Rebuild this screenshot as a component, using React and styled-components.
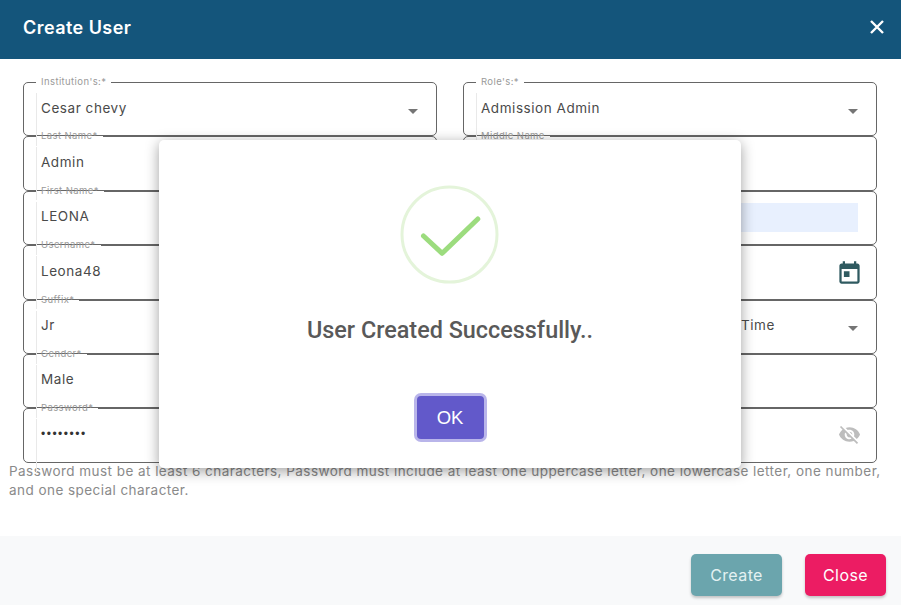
import React from 'react'
import styled, { createGlobalStyle } from 'styled-components'

const GlobalStyle = createGlobalStyle`
  html, body {
    margin: 0;
    background: #fff;
    overflow: hidden;
  }
  * {
    box-sizing: border-box;
  }
`

const Dialog = styled.div`
  position: relative;
  display: flex;
  flex-direction: column;
  width: 901px;
  height: 606px;
  font-family: Inter, 'Liberation Sans', sans-serif;
  background: #fff;
`

const Header = styled.header`
  display: flex;
  align-items: center;
  justify-content: space-between;
  height: 59px;
  padding: 0 17px 5px 23px;
  background: #14557b;
  color: #fff;
`

const Title = styled.h1`
  margin: 0;
  font-size: 18px;
  font-weight: 600;
  letter-spacing: 0.45px;
`

const CloseIcon = styled.svg`
  width: 14px;
  height: 14px;
  stroke: #fff;
  stroke-width: 2.4;
`

const Form = styled.div`
  display: grid;
  grid-template-columns: 414px 414px;
  column-gap: 26px;
  padding: 18px 0 0 23px;
`

const Column = styled.div`
  display: flex;
  flex-direction: column;
`

const Field = styled.fieldset`
  position: relative;
  display: block;
  width: 414px;
  height: 59.4px;
  margin: 0;
  padding: 0;
  border: 1px solid #666;
  border-radius: 5px;

  & + & {
    margin-top: -5px;
  }

  &::before {
    content: '';
    position: absolute;
    left: 12px;
    top: 5px;
    width: 1px;
    height: 53px;
    background: #e9e9e9;
  }
`

const Legend = styled.legend`
  height: 11px;
  margin-left: 12px;
  padding: 0 5px;
  font-size: 9.5px;
  line-height: 9px;
  letter-spacing: 0.4px;
  color: #9a9a9a;

  &:empty {
    padding: 0;
  }
`

const FieldBody = styled.div`
  display: flex;
  align-items: center;
  justify-content: space-between;
  height: 47px;
  padding: 0 17px 8px 17px;
`

const Value = styled.span`
  padding-left: ${(p) => p.$indent || 0}px;
  font-size: 13.5px;
  letter-spacing: 0.55px;
  color: #4a4a4a;
`

const Dots = styled(Value)`
  font-family: 'Liberation Sans', sans-serif;
  font-size: 12px;
  letter-spacing: 1.5px;
  color: #333;
`

const Caret = styled.span`
  width: 0;
  height: 0;
  margin: 7px 1px 0 0;
  border-left: 5.5px solid transparent;
  border-right: 5.5px solid transparent;
  border-top: 5.5px solid #757575;
`

const Autofill = styled.div`
  flex: 1;
  height: 29px;
  margin: 2px 1px 0 0;
  background: #e8f0fe;
`

const Spacer = styled.span`
  flex: 1;
`

const FieldIcon = styled.svg`
  flex: none;
  width: ${(p) => p.$size}px;
  height: ${(p) => p.$size}px;
  margin: ${(p) => p.$top}px ${(p) => p.$right}px 0 0;
  fill: ${(p) => p.$color};
`

const Helper = styled.p`
  margin: -1px 0 0;
  padding-left: 9px;
  font-size: 13.5px;
  line-height: 19px;
  letter-spacing: 0.45px;
  color: #8a8a8a;
  white-space: nowrap;
`

const Footer = styled.footer`
  display: flex;
  justify-content: flex-end;
  gap: 23px;
  height: 69px;
  margin-top: auto;
  margin-bottom: 1px;
  padding: 18px 15px 0 0;
  background: #f8f9fa;
`

const FooterButton = styled.button`
  width: ${(p) => p.$width}px;
  height: 42px;
  border: 0;
  border-radius: 5px;
  background: ${(p) => p.$bg};
  color: ${(p) => p.$color};
  font-family: inherit;
  font-size: 16px;
  letter-spacing: 0.4px;
  box-shadow: 0 2px 3px rgba(0, 0, 0, 0.22);
`

const Alert = styled.div`
  position: absolute;
  left: 159px;
  top: 140px;
  display: flex;
  flex-direction: column;
  align-items: center;
  width: 582px;
  height: 328px;
  padding-top: 45px;
  background: #fff;
  border-radius: 5px;
  box-shadow: 0 3px 14px rgba(0, 0, 0, 0.38);
  font-family: Roboto, 'Liberation Sans', sans-serif;
`

const SuccessRing = styled.svg`
  width: 99px;
  height: 99px;
  margin-right: 2px;
`

const AlertText = styled.h2`
  margin: 33px 0 0;
  font-size: 23.4px;
  font-weight: 500;
  line-height: 26px;
  color: #595959;
`

const OkButton = styled.button`
  width: 67px;
  height: 43px;
  margin-top: 53px;
  border: 0;
  border-radius: 4px;
  background: #6259ca;
  color: #fff;
  font-family: 'Liberation Sans', sans-serif;
  font-size: 18.5px;
  box-shadow: 0 0 0 3px #b9b5ea;
`

const SelectField = ({ label, value, indent }) => (
  <Field>
    <Legend>{label}</Legend>
    <FieldBody>
      <Value $indent={indent}>{value}</Value>
      <Caret />
    </FieldBody>
  </Field>
)

const TextField = ({ label, value, children }) => (
  <Field>
    <Legend>{label}</Legend>
    <FieldBody>
      {value && <Value>{value}</Value>}
      {children}
    </FieldBody>
  </Field>
)

export default function App() {
  return (
    <Dialog>
      <GlobalStyle />
      <Header>
        <Title>Create User</Title>
        <CloseIcon viewBox="0 0 14 14">
          <path d="M1 1l12 12M13 1L1 13" />
        </CloseIcon>
      </Header>

      <Form>
        <Column>
          <SelectField label="Institution's:*" value="Cesar chevy" />
          <TextField label="Last Name*" value="Admin" />
          <TextField label="First Name*" value="LEONA" />
          <TextField label="Username*" value="Leona48" />
          <TextField label="Suffix*" value="Jr" />
          <TextField label="Gender*" value="Male" />
          <TextField label="Password*">
            <Dots>••••••••</Dots>
          </TextField>
        </Column>
        <Column>
          <SelectField label="Role's:*" value="Admission Admin" />
          <TextField label="Middle Name" />
          <TextField>
            <Autofill />
          </TextField>
          <TextField>
            <Spacer />
            <FieldIcon viewBox="0 0 24 24" $size={27} $top={5} $right={-4} $color="#2f5a60">
              <path d="M19 3h-1V1h-2v2H8V1H6v2H5c-1.11 0-1.99.9-1.99 2L3 19c0 1.1.89 2 2 2h14c1.1 0 2-.9 2-2V5c0-1.1-.9-2-2-2zm0 16H5V8h14v11zM7 10h5v5H7z" />
            </FieldIcon>
          </TextField>
          <SelectField value="Time" indent={260} />
          <TextField />
          <TextField>
            <Spacer />
            <FieldIcon viewBox="0 0 24 24" $size={23} $top={1} $right={-2} $color="#bdbdbd">
              <path d="M12 7c2.76 0 5 2.24 5 5 0 .65-.13 1.26-.36 1.83l2.92 2.92c1.51-1.26 2.7-2.89 3.43-4.75-1.73-4.39-6-7.5-11-7.5-1.4 0-2.74.25-3.98.7l2.16 2.16C10.74 7.13 11.35 7 12 7zM2 4.27l2.28 2.28.46.46C3.08 8.3 1.78 10.02 1 12c1.73 4.39 6 7.5 11 7.5 1.55 0 3.03-.3 4.38-.84l.42.42L19.73 22 21 20.73 3.27 3 2 4.27zM7.53 9.8l1.55 1.55c-.05.21-.08.43-.08.65 0 1.66 1.34 3 3 3 .22 0 .44-.03.65-.08l1.55 1.55c-.67.33-1.41.53-2.2.53-2.76 0-5-2.24-5-5 0-.79.2-1.53.53-2.2zm4.31-.78l3.15 3.15.02-.16c0-1.66-1.34-3-3-3l-.17.01z" />
            </FieldIcon>
          </TextField>
        </Column>
      </Form>

      <Helper>
        Password must be at least 6 characters, Password must include at least one uppercase letter, one lowercase letter, one number,
        <br />
        and one special character.
      </Helper>

      <Footer>
        <FooterButton $width={91} $bg="#6ba5ad" $color="#e3f1f2">Create</FooterButton>
        <FooterButton $width={81} $bg="#ec1c63" $color="#fff">Close</FooterButton>
      </Footer>

      <Alert>
        <SuccessRing viewBox="0 0 99 99">
          <circle cx="49.5" cy="49.5" r="47.5" fill="none" stroke="#e4f4da" strokeWidth="3" />
          <path d="M23.5 51l18.7 17.3L77.8 34" fill="none" stroke="#9cdc7e" strokeWidth="5" strokeLinecap="round" strokeLinejoin="round" />
        </SuccessRing>
        <AlertText>User Created Successfully..</AlertText>
        <OkButton>OK</OkButton>
      </Alert>
    </Dialog>
  )
}
